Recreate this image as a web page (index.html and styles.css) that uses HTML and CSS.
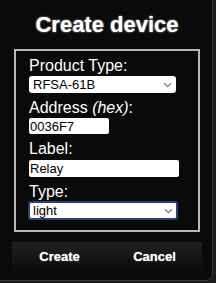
FILE: index.html
```html
<!DOCTYPE html>
<html>
<head>
<meta charset="utf-8">
<link rel="stylesheet" href="styles.css">
</head>
<body>
<div class="dialog">
  <h1 class="title">Create device</h1>
  <form class="form">
    <fieldset class="box">
      <label class="lbl">Product Type:</label>
      <div class="sel sel-product">
        <select class="control"><option>RFSA-61B</option></select>
        <svg class="chev" width="9" height="6" viewBox="0 0 9 6"><path d="M1 1.2 L4.5 4.5 L8 1.2" fill="none" stroke="#8a8a8a" stroke-width="1.5"/></svg>
      </div>
      <label class="lbl lbl-gap">Address <i>(hex)</i>:</label>
      <input class="control input-addr" type="text" value="0036F7">
      <label class="lbl lbl-gap">Label:</label>
      <input class="control input-label" type="text" value="Relay">
      <label class="lbl lbl-gap">Type:</label>
      <div class="sel sel-type">
        <select class="control focused"><option>light</option></select>
        <svg class="chev" width="9" height="6" viewBox="0 0 9 6"><path d="M1 1.2 L4.5 4.5 L8 1.2" fill="none" stroke="#8a8a8a" stroke-width="1.5"/></svg>
      </div>
    </fieldset>
    <div class="actions">
      <button type="button" class="btn">Create</button>
      <button type="button" class="btn">Cancel</button>
    </div>
  </form>
</div>
</body>
</html>
```
FILE: styles.css
```css
html, body {
  margin: 0;
  padding: 0;
}
body {
  background: #1c1c1c;
  height: 283px;
  overflow: hidden;
  font-family: "Liberation Sans", Arial, sans-serif;
}
.dialog {
  box-sizing: border-box;
  margin: -6px 0 0 -6px;
  width: 219px;
  height: 287px;
  padding: 5px 0 0 5px;
  border: 1px solid #3a3a3a;
  border-radius: 7px;
  background: #0a0a0a;
}
.title {
  margin: 0;
  padding: 12px 0 0 2px;
  font-size: 22px;
  line-height: 26px;
  font-weight: bold;
  color: #fff;
  text-align: center;
  text-shadow: 0 0 2px rgba(255,255,255,0.8);
}
.form {
  margin: 0;
}
.box {
  box-sizing: border-box;
  margin: 11px 0 0 14px;
  width: 186px;
  min-width: 0;
  padding: 6px 0 10px 13px;
  border: 2px solid #b8b8b8;
}
.lbl {
  display: block;
  font-size: 16px;
  line-height: 18px;
  color: #fff;
}
.lbl-gap {
  margin-top: 6px;
}
.control {
  display: block;
  box-sizing: border-box;
  margin: 0;
  font-family: "Liberation Sans", Arial, sans-serif;
  font-size: 13px;
  color: #000;
  background: #fff;
  border: 0;
  outline: none;
}
.sel {
  position: relative;
}
.sel select {
  -webkit-appearance: none;
  appearance: none;
  width: 100%;
  height: 100%;
  border-radius: 3px;
  padding: 0 0 0 4px;
}
.chev {
  position: absolute;
  top: 50%;
  right: 4px;
  margin-top: -3px;
}
.sel-product {
  margin-top: 1px;
  width: 147px;
  height: 17px;
}
.input-addr {
  margin-top: 1px;
  width: 80px;
  height: 16px;
  padding: 0 1px;
  border-radius: 2px;
}
.input-label {
  margin-top: 2px;
  width: 150px;
  height: 17px;
  padding: 0 1px;
  border-radius: 2px;
}
.sel-type {
  margin-left: -1px;
  width: 150px;
  height: 19px;
}
.sel-type .chev {
  right: 5px;
}
.focused {
  border: 2px solid #23427a;
}
.sel .focused {
  padding-left: 3px;
}
.actions {
  display: flex;
  margin: 10px 0 0 12px;
  width: 190px;
  height: 29px;
  background: linear-gradient(#212121, #0b0b0b);
}
.btn {
  flex: 1;
  margin: 0;
  padding: 0;
  border: 0;
  background: none;
  color: #fff;
  font-family: "Liberation Sans", Arial, sans-serif;
  font-size: 13px;
  font-weight: bold;
  line-height: 29px;
  text-shadow: 0 0 1px rgba(255,255,255,0.7);
}
```
